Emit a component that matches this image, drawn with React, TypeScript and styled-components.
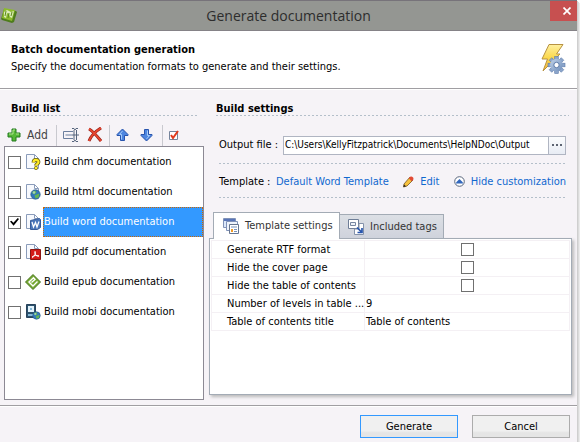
import React, { useState } from "react";
import styled, { createGlobalStyle } from "styled-components";

const Global = createGlobalStyle`
  * { box-sizing: border-box; }
  body { margin: 0; background: #fff; }
  body, button, input { font-family: "DejaVu Sans Condensed", "Noto Sans", sans-serif; font-size: 11px; line-height: 14px; color: #000; }
  svg { display: block; flex: none; }
`;

const Dialog = styled.main`
  display: flex;
  flex-direction: column;
  min-height: calc(100vh - 4px);
  margin-right: 4px;
  background: #f6f3f7;
  box-shadow: 1px 1px 0 #cfcfcf, 2px 2px 0 #dcdcdc, 3px 3px 0 #ebebeb;
`;

const TitleBar = styled.header`
  display: grid;
  grid-template-columns: 27px 1fr 27px;
  height: 31px;
  background: #949692;
  border-top: 1px solid #77737a;
  border-bottom: 1px solid #858287;
`;

const TitleIcon = styled.div`
  padding: 6px 0 0 1px;
`;

const Title = styled.h1`
  margin: 0;
  font: 400 14px/29px "Open Sans", sans-serif;
  color: #2d2d2d;
  text-align: center;
`;

const CloseButton = styled.button`
  display: grid;
  place-items: center;
  width: 27px;
  height: 20px;
  padding: 0 0 0 6px;
  border: 0;
  background: #c75050;
`;

const Intro = styled.section`
  display: flex;
  justify-content: space-between;
  height: 58px;
  padding: 12px 11px 0 11px;
  background: #fff;
  border-bottom: 1px solid #a09ea2;
`;

const Heading = styled.h2`
  margin: 0;
  font-size: 11px;
  line-height: 14px;
  font-weight: 700;
`;

const IntroText = styled.p`
  margin: 3px 0 0;
`;

const Body = styled.div`
  display: grid;
  grid-template-columns: 200px 1fr;
  gap: 5px;
  flex: 1;
  padding: 12px 5px 5px 4px;
  border-top: 1px solid #fff;
`;

const Column = styled.section`
  display: flex;
  flex-direction: column;
  min-width: 0;
`;

const dashedBottom = `
  background: repeating-linear-gradient(90deg, #b4bfca 0 2px, transparent 2px 4px) bottom / 100% 1px no-repeat;
`;

const GroupTitle = styled(Heading)<{ $end: number }>`
  margin: 0 ${(p) => p.$end}px 0 7px;
  ${dashedBottom}
`;

const Toolbar = styled.div`
  display: flex;
  align-items: center;
  height: 30px;
  padding: 8px 0 0 3px;
`;

const ToolButton = styled.button<{ $width: number }>`
  display: flex;
  align-items: center;
  gap: 6px;
  width: ${(p) => p.$width}px;
  height: 20px;
  padding: 0;
  border: 0;
  background: none;
  color: #444;
  font-size: 12px;
`;

const Separator = styled.span`
  width: 1px;
  height: 21px;
  margin-right: 6px;
  background: #c9c9cf;
`;

const BuildList = styled.ul`
  flex: 1;
  margin: 0;
  padding: 0;
  list-style: none;
  background: #fff;
  border: 1px solid #8c8994;
`;

const BuildRow = styled.li`
  display: flex;
  align-items: center;
  height: 30px;
  padding-left: 3px;
`;

const BuildIcon = styled.span`
  width: 18px;
  margin-left: 4px;
`;

const BuildLabel = styled.label<{ $selected: boolean }>`
  flex: 1;
  height: 30px;
  line-height: 28px;
  white-space: nowrap;
  border: 1px ${(p) => (p.$selected ? "dotted #cc6600" : "solid transparent")};
  background: ${(p) => (p.$selected ? "#3399ff" : "transparent")};
  color: ${(p) => (p.$selected ? "#fff" : "#000")};
`;

const CheckInput = styled.input`
  appearance: none;
  display: grid;
  place-items: center;
  flex: none;
  width: 13px;
  height: 13px;
  margin: 0;
  background: #fff;
  border: 1px solid #707070;
  &:checked::after {
    content: "";
    width: 9px;
    height: 8px;
    background: #000;
    clip-path: polygon(0 45%, 16% 35%, 38% 60%, 86% 0, 100% 14%, 40% 96%);
  }
`;

const Settings = styled.div`
  display: flex;
  flex-direction: column;
  margin: 0 6px 14px 10px;
`;

const SettingLine = styled.div<{ $height: number; $top: number }>`
  display: flex;
  align-items: center;
  height: ${(p) => p.$height}px;
  padding-top: ${(p) => p.$top}px;
  ${dashedBottom}
`;

const FieldLabel = styled.label`
  width: 64px;
  flex: none;
`;

const PathField = styled.div`
  display: flex;
  flex: 1;
  height: 19px;
  min-width: 0;
  background: #fff;
  border: 1px solid #b0b5c2;
`;

const PathInput = styled.input`
  flex: 1;
  min-width: 0;
  padding: 0 0 0 1px;
  border: 0;
  background: transparent;
  outline: 0;
  font-size: 10px;
`;

const BrowseButton = styled.button`
  display: grid;
  place-items: center;
  width: 17px;
  padding: 0;
  border: 0;
  border-left: 1px solid #b0b5c2;
  background: linear-gradient(#fbfcfe, #e8ecf4);
`;

const Link = styled.a`
  display: flex;
  align-items: center;
  gap: 6px;
  color: #1068cf;
  text-decoration: none;
  white-space: nowrap;
`;

const LinkGroup = styled.div`
  display: flex;
  justify-content: space-between;
  gap: 12px;
  flex: 1;
`;

const TemplateLabel = styled.span`
  width: 57px;
`;

const Tabs = styled.div`
  display: flex;
  align-items: flex-end;
  padding-left: 4px;
`;

const Tab = styled.button<{ $active: boolean }>`
  display: flex;
  align-items: center;
  gap: 5px;
  width: ${(p) => (p.$active ? 127 : 104)}px;
  height: ${(p) => (p.$active ? 27 : 24)}px;
  margin-bottom: ${(p) => (p.$active ? -1 : 0)}px;
  padding: 0 0 0 ${(p) => (p.$active ? 9 : 8)}px;
  border: 1px solid #a3abb5;
  border-bottom: 0;
  border-left-width: ${(p) => (p.$active ? 1 : 0)}px;
  background: ${(p) => (p.$active ? "#fff" : "linear-gradient(#dcdfe5, #cfd3dc)")};
  color: #333;
  white-space: nowrap;
  z-index: 1;
`;

const Panel = styled.div`
  flex: 1;
  margin: 0 0 5px;
  padding: 1px;
  background: #fff;
  border: 1px solid #a3abb5;
  box-shadow: 2px 2px 3px #bbb;
`;

const Table = styled.table`
  width: 100%;
  table-layout: fixed;
  border-collapse: collapse;
`;

const Cell = styled.td<{ $name?: boolean }>`
  width: ${(p) => (p.$name ? "153px" : "auto")};
  height: 18px;
  padding: 0 0 0 ${(p) => (p.$name ? 15 : 1)}px;
  border: 1px solid #f4f0f4;
  white-space: nowrap;
`;

const CenteredCheck = styled(CheckInput)`
  margin: 0 auto;
`;

const Footer = styled.footer`
  display: flex;
  justify-content: flex-end;
  gap: 14px;
  height: 37px;
  padding: 9px 7px 0;
  border-top: 1px solid #a09ea2;
  box-shadow: inset 0 1px 0 #fff;
`;

const ActionButton = styled.button<{ $primary?: boolean }>`
  width: 98px;
  height: 23px;
  padding: 0;
  border: 1px solid ${(p) => (p.$primary ? "#3399ff" : "#acacac")};
  background: linear-gradient(#f0f0f0 0 70%, #e5e5e5 80%);
`;

const LogoIcon = () => (
  <svg width="17" height="17" viewBox="0 0 17 17">
    <path d="M3 2 15 4 16 5 13 15 11 16 1 13 0 12Z" fill="#4e7c1d" />
    <path d="M3 1 14 3 11 14 1 11Z" fill="#8dbb2d" />
    <path d="M3 5 6 3 10 5 13 4 11 11 9 10 8 7 6 6 5 11 3 10Z" fill="#dcebb9" />
    <path d="M5 4 4 9M8 6 7 11M11 5 10 9" stroke="#5c8a1d" fill="none" />
  </svg>
);

const BoltIcon = () => (
  <svg width="26" height="32" viewBox="0 0 26 32">
    <defs>
      <linearGradient id="bolt" x2="0" y2="1"><stop stopColor="#fff0a0" /><stop offset=".5" stopColor="#fbd84c" /><stop offset="1" stopColor="#f6b73c" /></linearGradient>
      <linearGradient id="gear" x2="1" y2="1"><stop stopColor="#c2d3e9" /><stop offset="1" stopColor="#6d8dba" /></linearGradient>
    </defs>
    <path d="M9 1.500H23L16.500 11H20L3 28 7.500 16H2Z" fill="url(#bolt)" stroke="#b79242" />
    <g transform="translate(16.500 22)">
      <g fill="#8ba5cb" stroke="#5d7ba9" strokeWidth=".6">
        {[0, 45, 90, 135].map((a) => <rect key={a} x="-1.800" y="-8.500" width="3.600" height="17" transform={`rotate(${a})`} />)}
      </g>
      <circle r="6.300" fill="url(#gear)" />
      <circle r="2.700" fill="#fff" stroke="#5d7ba9" />
    </g>
  </svg>
);

const AddIcon = () => (
  <svg width="14" height="14" viewBox="0 0 14 14">
    <path d="M5 1H9V5H13V9H9V13H5V9H1V5H5Z" fill="#55b837" stroke="#247b20" />
    <path d="M6 2H8M6 2V6H2M9 6H12" stroke="#aee58f" fill="none" />
  </svg>
);

const RenameIcon = () => (
  <svg width="17" height="16" viewBox="0 0 17 16">
    <path d="M10 4.500H.500V11.500H10M2.500 8H9" stroke="#6b7e9e" fill="none" />
    <path d="M9 1.500H11L12 3 13 1.500H15M9 14.500H11L12 13 13 14.500H15M11 3V13M13.500 3V13M9 8H16" stroke="#56657d" fill="none" />
  </svg>
);

const DeleteIcon = () => (
  <svg width="16" height="16" viewBox="0 0 16 16">
    <path d="M2 2C6 4 10 9 14 14M14 1C9 4 4 9 2 14" stroke="#962018" strokeWidth="3" fill="none" />
    <path d="M2 2C6 4 10 9 14 14M14 1C9 4 4 9 2 14" stroke="#e84730" strokeWidth="1.700" fill="none" />
  </svg>
);

const ArrowIcon = ({ down = false }: { down?: boolean }) => (
  <svg width="13" height="14" viewBox="0 0 13 14">
    <g transform={down ? "rotate(180 6.500 7)" : undefined}>
      <path d="M6.500 1 12 6.500V7.500H8.500V12.500H4.500V7.500H1V6.500Z" fill="#4e86e0" stroke="#2854ad" />
      <path d="M6.500 3 3.500 6.500H5.500V11.500" stroke="#a6cdfa" fill="none" />
    </g>
  </svg>
);

const CheckAllIcon = () => (
  <svg width="10" height="11" viewBox="0 0 10 11">
    <path d="M.500 1.500H8.500V9.500H.500Z" fill="#fff" stroke="#75849c" />
    <path d="M2 5 4 8 9 1" stroke="#e23a1e" strokeWidth="2" fill="none" />
  </svg>
);

const Sheet = () => (
  <path d="M1.500.500H9.500L13.500 4.500V14.500H1.500ZM9.500.500V4.500H13.500" fill="#f7f9fd" stroke="#8b9cba" />
);

const GlobeIcon = ({ x, y, r }: { x: number; y: number; r: number }) => (
  <g transform={`translate(${x} ${y}) scale(${r / 5})`}>
    <circle r="4.700" fill="#3277bd" stroke="#245686" strokeWidth=".7" />
    <path d="M-3-3 0-4 1-2-1 0-3-1ZM1 0 4-1 3 3 0 4-1 1Z" fill="#64b453" />
    <circle cx="-1.500" cy="-2" r="1.200" fill="#d3ebfa" opacity=".6" />
  </g>
);

const FormatIcon = ({ kind }: { kind: string }) => (
  <svg width="16" height="16" viewBox="0 0 16 16">
    {["chm", "html", "word", "pdf"].includes(kind) && <Sheet />}
    {kind === "chm" && (
      <>
        <path d="M8.500 8.500C8.500 5 13.500 5 13.500 8 13.500 10 11 10 11 11.500" stroke="#68600c" strokeWidth="3.800" fill="none" />
        <circle cx="11" cy="14" r="1.900" fill="#68600c" />
        <path d="M8.500 8.500C8.500 5 13.500 5 13.500 8 13.500 10 11 10 11 11.500" stroke="#ffeb25" strokeWidth="2.200" fill="none" />
        <circle cx="11" cy="14" r="1.300" fill="#ffeb25" />
      </>
    )}
    {kind === "html" && <GlobeIcon x={10.5} y={10.5} r={5} />}
    {kind === "word" && (
      <>
        <path d="M5.500 6.500 14.500 4.500 15.500 5.500V13.500L12.500 15.500H5.500Z" fill="#4b76b9" stroke="#365b99" />
        <path d="M7 8 8.500 13 10.500 8.500 12 13 14 7.500" stroke="#fff" strokeWidth="1.300" fill="none" />
      </>
    )}
    {kind === "pdf" && (
      <>
        <path d="M5.500 5.500H15.500V15.500H5.500Z" fill="#d41b18" stroke="#8b1511" />
        <path d="M10 7C11 12 8 13 7 14M10 8C10 11 12 13 14 12M7 13C9 11 12 11 14 12" stroke="#fff" fill="none" />
      </>
    )}
    {kind === "epub" && (
      <>
        <path d="M8 .500 15.500 8 8 15.500.500 8Z" fill="#76a833" stroke="#47741e" />
        <path d="M6.500 8.500 10 5.500 8.500 3.800 4 8 8 12 12.500 7.500" stroke="#fff" strokeWidth="1.400" fill="none" />
      </>
    )}
    {kind === "mobi" && (
      <>
        <path d="M1.500.500H10.500V13.500H1.500Z" fill="#2c526d" stroke="#29425b" />
        <path d="M3 2H9V8H3Z" fill="#e2f2fb" />
        <path d="M5 5H7M3 11H8" stroke="#85b8d6" strokeWidth="2" />
        <GlobeIcon x={11.5} y={11.5} r={4} />
      </>
    )}
  </svg>
);

const PencilIcon = () => (
  <svg width="11" height="12" viewBox="0 0 11 12">
    <path d="M1 8 7 1 10 4 4 10 .500 11Z" fill="#f7c23c" stroke="#765523" strokeWidth=".8" />
    <path d="M7 1C9-.500 11.500 2 10 4L8.500 5.200 5.800 2.300Z" fill="#e24a34" />
    <path d="M.500 11 1 8.500 3 10.300Z" fill="#222" />
  </svg>
);

const CollapseIcon = () => (
  <svg width="11" height="11" viewBox="0 0 11 11">
    <circle cx="5.500" cy="5.500" r="4.800" fill="#fff" stroke="#58657c" />
    <path d="M2 6.500 5.500 3 9 6.500V7.500H2Z" fill="#3267bc" />
  </svg>
);

const TemplateIcon = () => (
  <svg width="17" height="16" viewBox="0 0 17 16">
    <path d="M.500.500H12.500V9.500H.500Z" fill="#dce8fa" stroke="#8092b8" />
    <path d="M1 2H12" stroke="#5874b8" strokeWidth="2" />
    <path d="M3.500 3.500H14.500V12.500H3.500Z" fill="#eef3fb" stroke="#8092b8" />
    <path d="M6.500 6.500H15.500V15.500H6.500Z" fill="#fff" stroke="#66758f" />
    <path d="M8 9H14M11 11.500H14M11 13.500H14" stroke="#7891b9" />
    <path d="M8 11H10V14H8Z" fill="#f09a25" />
  </svg>
);

const TagsIcon = () => (
  <svg width="17" height="16" viewBox="0 0 17 16">
    <path d="M.500.500H10.500V9.500H.500Z" fill="#fff" stroke="#6f7e97" />
    <path d="M2.500 3.500H7.500V6.500H2.500Z" fill="#eef2f8" stroke="#7787a1" />
    <path d="M6.500 10V15.500H15.500V4.500H11V10Z" fill="#fff" stroke="#8492aa" />
    <path d="M9 8.500 14 13.500M14 9V13.500H9.500" stroke="#2856ad" strokeWidth="1.700" fill="none" />
  </svg>
);

const FORMATS = ["chm", "html", "word", "pdf", "epub", "mobi"];
const OPTIONS: { name: string; value?: string }[] = [
  { name: "Generate RTF format" },
  { name: "Hide the cover page" },
  { name: "Hide the table of contents" },
  { name: "Number of levels in table ...", value: "9" },
  { name: "Table of contents title", value: "Table of contents" },
];

export default function App() {
  const [path, setPath] = useState("C:\\Users\\KellyFitzpatrick\\Documents\\HelpNDoc\\Output");
  return (
    <>
      <Global />
      <Dialog>
        <TitleBar>
          <TitleIcon><LogoIcon /></TitleIcon>
          <Title>Generate documentation</Title>
          <CloseButton aria-label="Close">
            <svg width="8" height="8" viewBox="0 0 8 8"><path d="M.500.500 7.500 7.500M7.500.500.500 7.500" stroke="#fff" strokeWidth="1.700" /></svg>
          </CloseButton>
        </TitleBar>
        <Intro>
          <div>
            <Heading>Batch documentation generation</Heading>
            <IntroText>Specify the documentation formats to generate and their settings.</IntroText>
          </div>
          <BoltIcon />
        </Intro>
        <Body>
          <Column>
            <GroupTitle $end={7}>Build list</GroupTitle>
            <Toolbar>
              <ToolButton $width={49}><AddIcon />Add</ToolButton>
              <Separator />
              <ToolButton $width={24} aria-label="Rename"><RenameIcon /></ToolButton>
              <ToolButton $width={22} aria-label="Delete"><DeleteIcon /></ToolButton>
              <Separator />
              <ToolButton $width={24} aria-label="Move up"><ArrowIcon /></ToolButton>
              <ToolButton $width={22} aria-label="Move down"><ArrowIcon down /></ToolButton>
              <Separator />
              <ToolButton $width={20} aria-label="Check all"><CheckAllIcon /></ToolButton>
            </Toolbar>
            <BuildList>
              {FORMATS.map((f) => (
                <BuildRow key={f}>
                  <CheckInput type="checkbox" id={f} defaultChecked={f === "word"} />
                  <BuildIcon><FormatIcon kind={f} /></BuildIcon>
                  <BuildLabel htmlFor={f} $selected={f === "word"}>Build {f} documentation</BuildLabel>
                </BuildRow>
              ))}
            </BuildList>
          </Column>
          <Column>
            <GroupTitle $end={3}>Build settings</GroupTitle>
            <Settings>
              <SettingLine $height={48} $top={10}>
                <FieldLabel htmlFor="path">Output file :</FieldLabel>
                <PathField>
                  <PathInput id="path" value={path} onChange={(e) => setPath(e.target.value)} />
                  <BrowseButton aria-label="Browse">
                    <svg width="10" height="2" viewBox="0 0 10 2"><path d="M0 0H2V2H0ZM4 0H6V2H4ZM8 0H10V2H8Z" fill="#5d6472" /></svg>
                  </BrowseButton>
                </PathField>
              </SettingLine>
              <SettingLine $height={34} $top={1}>
                <TemplateLabel>Template :</TemplateLabel>
                <LinkGroup>
                  <Link href="#template">Default Word Template</Link>
                  <Link href="#edit"><PencilIcon />Edit</Link>
                  <Link href="#customization"><CollapseIcon />Hide customization</Link>
                </LinkGroup>
              </SettingLine>
            </Settings>
            <Tabs role="tablist">
              <Tab role="tab" aria-selected $active><TemplateIcon />Template settings</Tab>
              <Tab role="tab" aria-selected={false} $active={false}><TagsIcon />Included tags</Tab>
            </Tabs>
            <Panel role="tabpanel">
              <Table>
                <tbody>
                  {OPTIONS.map((o, i) => (
                    <tr key={o.name}>
                      <Cell $name>{o.value ? o.name : <label htmlFor={`option${i}`}>{o.name}</label>}</Cell>
                      <Cell>{o.value ?? <CenteredCheck type="checkbox" id={`option${i}`} />}</Cell>
                    </tr>
                  ))}
                </tbody>
              </Table>
            </Panel>
          </Column>
        </Body>
        <Footer>
          <ActionButton $primary>Generate</ActionButton>
          <ActionButton>Cancel</ActionButton>
        </Footer>
      </Dialog>
    </>
  );
}
